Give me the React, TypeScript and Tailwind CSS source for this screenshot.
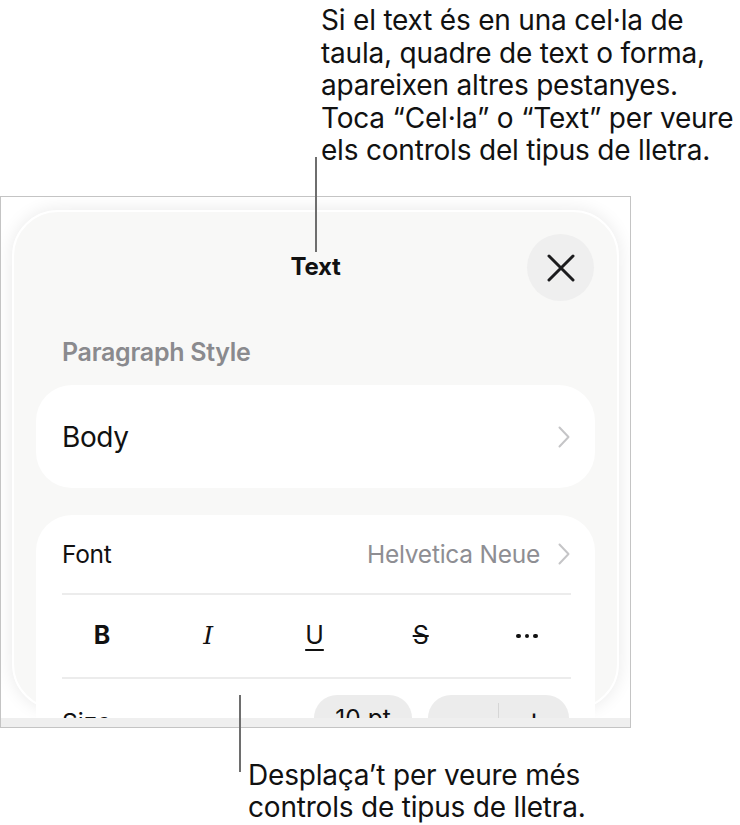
import React from "react";

const font = { fontFamily: "Inter, 'Noto Sans', sans-serif" };

function Chevron() {
  return (
    <svg width="12" height="22" viewBox="0 0 12 22" fill="none">
      <path d="M1.5 1.5 L10.5 11 L1.5 20.5" stroke="#c5c5c7" strokeWidth="2" strokeLinecap="round" strokeLinejoin="round" />
    </svg>
  );
}

export default function App() {
  return (
    <div className="relative w-[740px] h-[825px] bg-white text-[#111]" style={font}>
      {/* top callout */}
      <div className="h-[196px] pl-[321px] pt-[4px] text-[28px] leading-[32.5px] tracking-[-0.2px] whitespace-nowrap">
        Si el text és en una cel·la de
        <br />
        taula, quadre de text o forma,
        <br />
        apareixen altres pestanyes.
        <br />
        Toca “Cel·la” o “Text” per veure
        <br />
        els controls del tipus de lletra.
      </div>

      {/* framed screenshot */}
      <div className="w-[631px] h-[532px] border border-[#c4c4c4] bg-white overflow-hidden">
        <div className="h-[521px] overflow-hidden px-[11px] pt-[13px]">
          <div className="h-[500px] rounded-[46px] bg-[#f8f8f7] border-2 border-white shadow-[0_0_18px_rgba(0,0,0,0.09)]">
            {/* header */}
            <div className="relative h-[66px] mt-[22px] flex items-center justify-center">
              <span className="text-[24px] font-bold tracking-[-0.3px]">Text</span>
              <div className="absolute right-[23px] top-0 w-[67px] h-[67px] rounded-full bg-[#efefef] flex items-center justify-center">
                <svg width="28" height="28" viewBox="0 0 28 28">
                  <path d="M2 2 L26 26 M26 2 L2 26" stroke="#1c1c1e" strokeWidth="3" strokeLinecap="round" />
                </svg>
              </div>
            </div>

            <div className="pl-[48px] mt-[38px] h-[28px] text-[25px] leading-[28px] font-semibold text-[#8a8a8e] tracking-[-0.3px]">
              Paragraph Style
            </div>

            {/* body card */}
            <div className="mx-[22px] mt-[19px] h-[103px] rounded-[36px] bg-white flex items-center justify-between pl-[26px] pr-[25px]">
              <span className="text-[28px] tracking-[-0.4px]">Body</span>
              <Chevron />
            </div>

            {/* font card */}
            <div className="mx-[22px] mt-[27px] rounded-t-[36px] bg-white pl-[26px] pr-[24px] pb-[40px]">
              <div className="h-[80px] flex items-center justify-between border-b-2 border-[#ececec]">
                <span className="text-[24.5px] tracking-[-0.3px]">Font</span>
                <div className="flex items-center gap-[18px] mr-[1px]">
                  <span className="text-[24.5px] text-[#8e8e93] tracking-[-0.25px]">Helvetica Neue</span>
                  <Chevron />
                </div>
              </div>
              <div className="h-[84px] border-b-2 border-[#ececec]">
                <div className="ml-[-13px] w-[531px] h-full grid grid-cols-5 items-center text-[25px]">
                  <span className="text-center font-bold">B</span>
                  <span className="text-center italic" style={{ fontFamily: "'DejaVu Serif', serif" }}>I</span>
                  <span className="text-center underline underline-offset-[5px] decoration-[2px]">U</span>
                  <span className="text-center line-through decoration-[2px]">S</span>
                  <div className="flex justify-center gap-[4px]">
                    <span className="w-[4.5px] h-[4.5px] rounded-full bg-[#111]" />
                    <span className="w-[4.5px] h-[4.5px] rounded-full bg-[#111]" />
                    <span className="w-[4.5px] h-[4.5px] rounded-full bg-[#111]" />
                  </div>
                </div>
              </div>
              <div className="h-[80px] flex items-start pt-[16px] justify-between">
                <span className="text-[24.5px] mt-[9px]">Size</span>
                <div className="flex gap-[16px] mr-[2px]">
                  <div className="w-[98px] h-[46px] rounded-full bg-[#ececec] flex items-center justify-center text-[24.5px]">10 pt</div>
                  <div className="w-[141px] h-[46px] rounded-full bg-[#ececec] flex items-center text-[28px]">
                    <span className="flex-1 text-center">−</span>
                    <span className="w-px h-[30px] bg-[#d6d6d6]" />
                    <span className="flex-1 text-center">+</span>
                  </div>
                </div>
              </div>
            </div>
          </div>
        </div>
        <div className="h-[9px] bg-[#efefef]" />
      </div>

      {/* bottom callout */}
      <div className="pl-[248px] pt-[32px] text-[28px] leading-[31.5px] tracking-[-0.2px] whitespace-nowrap">
        Desplaça’t per veure més
        <br />
        controls de tipus de lletra.
      </div>

      {/* leader lines */}
      <div className="absolute left-[315px] top-[157px] w-[2px] h-[95px] bg-[#6e6e6e]" />
      <div className="absolute left-[239px] top-[695px] w-[2px] h-[77px] bg-[#6e6e6e]" />
    </div>
  );
}
